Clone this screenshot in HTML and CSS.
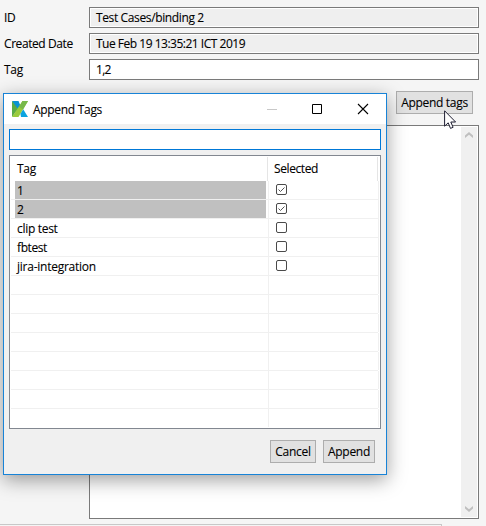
FILE: index.html
```html
<!DOCTYPE html>
<html lang="en">
<head>
<meta charset="utf-8">
<title>Append Tags</title>
<link rel="stylesheet" href="styles.css">
</head>
<body>
<main class="page">
  <div class="field"><label>ID</label><div class="box readonly"><span class="t-id">Test Cases/binding 2</span></div></div>
  <div class="field"><label class="t-created">Created Date</label><div class="box readonly"><span class="t-date">Tue Feb 19 13:35:21 ICT 2019</span></div></div>
  <div class="field"><label>Tag</label><div class="box"><span class="t-value">1,2</span></div></div>
  <div class="actions"><button class="button append-tags">Append tags</button></div>
  <div class="area">
    <div class="scrollbar">
      <svg width="8" height="6" viewBox="0 0 8 6"><path d="M0 3.6L4 0l4 3.6V6L4 2.8 0 6z" fill="#bfbfbf"/></svg>
      <svg width="8" height="6" viewBox="0 0 8 6"><path d="M0 0l4 3.2L8 0v2.4L4 6 0 2.4z" fill="#bfbfbf"/></svg>
    </div>
  </div>
  <div class="next-panel"></div>
</main>

<section class="dialog">
  <header class="titlebar">
    <svg class="logo" width="16" height="16" viewBox="0 0 16 16">
      <path d="M0 0h6.5l2.5 6-4 5z" fill="#0a93d3"/>
      <path d="M0 0l6 8-6 8z" fill="#5aab46"/>
      <path d="M10.5 0H16L6.5 16H0z" fill="#9aca3c"/>
      <path d="M10.5 0H16l-5 8.4-4-2.6z" fill="#78b94a"/>
      <path d="M11.2 8.2L16 16H9l-.6-3.2z" fill="#0ba3df"/>
    </svg>
    <span class="title">Append Tags</span>
    <svg class="controls" width="102" height="12" viewBox="0 0 102 12" fill="none">
      <path d="M0 6.5h10" stroke="#c8c8c8"/>
      <path d="M45.5 1.5h9v9h-9z" stroke="#000"/>
      <path d="M91 1l10 10M101 1L91 11" stroke="#000" stroke-width="1.1"/>
    </svg>
  </header>
  <div class="search"></div>
  <div class="table">
    <div class="head"><span class="th-tag">Tag</span><span class="th-selected">Selected</span></div>
    <div class="row"><div class="name picked">1</div><div class="cell"><i class="check"><svg width="9" height="9" viewBox="0 0 9 9"><path d="M1.5 4.5l2 2 4-4" fill="none" stroke="#555"/></svg></i></div></div>
    <div class="row"><div class="name picked">2</div><div class="cell"><i class="check"><svg width="9" height="9" viewBox="0 0 9 9"><path d="M1.5 4.5l2 2 4-4" fill="none" stroke="#555"/></svg></i></div></div>
    <div class="row"><div class="name">clip test</div><div class="cell"><i class="check"></i></div></div>
    <div class="row"><div class="name t-fb">fbtest</div><div class="cell"><i class="check"></i></div></div>
    <div class="row"><div class="name t-jira">jira-integration</div><div class="cell"><i class="check"></i></div></div>
    <div class="row"><div class="name"></div><div class="cell"></div></div>
    <div class="row"><div class="name"></div><div class="cell"></div></div>
    <div class="row"><div class="name"></div><div class="cell"></div></div>
    <div class="row"><div class="name"></div><div class="cell"></div></div>
    <div class="row"><div class="name"></div><div class="cell"></div></div>
    <div class="row"><div class="name"></div><div class="cell"></div></div>
    <div class="row"><div class="name"></div><div class="cell"></div></div>
    <div class="row last"><div class="name"></div><div class="cell"></div></div>
  </div>
  <footer class="buttons"><button class="button cancel">Cancel</button><button class="button append">Append</button></footer>
</section>

<svg class="cursor" width="13" height="20" viewBox="0 0 13 20"><path d="M.6 .8v15.4l3.6-3.4 2.3 5.6 2.6-1.1-2.3-5.3h4.8z" fill="#fff" stroke="#1c1c30"/></svg>
</body>
</html>
```

FILE: styles.css
```css
* { box-sizing: border-box; }

body {
  margin: 0;
  width: 486px;
  height: 526px;
  overflow: hidden;
  position: relative;
  background: #f5f5f5;
  color: #000;
  font: 12px/19px "Open Sans", "Noto Sans", sans-serif;
  letter-spacing: -0.3px;
  -webkit-text-stroke: 0.1px #000;
}

svg { display: block; }

.page { padding-top: 7px; }

.field {
  display: grid;
  grid-template-columns: 85px 390px;
  padding-left: 4px;
  margin-bottom: 5px;
  height: 21px;
  line-height: 21px;
}

.box {
  border: 1px solid #7a7a7a;
  background: #fff;
  padding-left: 6px;
  line-height: 19px;
  white-space: nowrap;
}

.readonly {
  background: #efefef;
  box-shadow: inset 0 0 0 1px #fff;
}

.t-id { letter-spacing: -0.37px; }
.t-created { letter-spacing: -0.42px; }
.t-date { letter-spacing: -0.49px; }
.t-value { letter-spacing: -0.7px; }

.actions {
  display: flex;
  justify-content: flex-end;
  padding: 6px 13px 0 0;
  height: 40px;
}

.button {
  height: 23px;
  padding: 0;
  border: 1px solid #adadad;
  background: #e1e1e1;
  color: #000;
  font: inherit;
  line-height: 21px;
  letter-spacing: inherit;
  white-space: nowrap;
}

.append-tags { width: 77px; }

.area {
  width: 390px;
  height: 394px;
  margin-left: 89px;
  padding: 1px;
  border: 1px solid #7a7a7a;
  background: #fff;
  display: flex;
  justify-content: flex-end;
}

.scrollbar {
  width: 16px;
  background: #f0f0f0;
  display: flex;
  flex-direction: column;
  justify-content: space-between;
  align-items: center;
  padding: 5px 1px 5px 0;
}

.next-panel {
  width: 442px;
  height: 2px;
  margin-top: 5px;
  border: 1px solid #c8c8c8;
  border-width: 1px 1px 0 0;
}

.dialog {
  position: absolute;
  left: 3px;
  top: 93px;
  width: 384px;
  height: 382px;
  border: 1px solid #1883d7;
  background: #f0f0f0;
  box-shadow: 0 5px 18px rgba(0, 0, 0, 0.38);
}

.titlebar {
  height: 30px;
  background: #fff;
  display: flex;
  align-items: center;
  padding: 0 17px 0 8px;
}

.title { margin-left: 5px; }
.controls { margin-left: auto; }

.search {
  height: 21px;
  margin: 5px 5px 0;
  border: 1px solid #0078d7;
  background: #fff;
}

.table {
  height: 274px;
  margin: 5px 5px 0;
  border: 1px solid #828790;
  background: #fff;
  padding: 1px 2px 1px 1px;
}

.head {
  display: grid;
  grid-template-columns: 257px 110px;
  height: 24px;
  line-height: 24px;
}

.head span { border-right: 1px solid #e5e5e5; padding-left: 6px; }
.head .th-selected { letter-spacing: -0.4px; }

.row {
  display: grid;
  grid-template-columns: 258px 110px;
  height: 19px;
  border-bottom: 1px solid #f0f0f0;
}

.last { border-bottom: 0; height: 18px; }

.name {
  border-right: 1px solid #f0f0f0;
  padding-left: 6px;
  line-height: 19px;
}

.t-fb { letter-spacing: -0.4px; }
.t-jira { letter-spacing: -0.25px; }

.picked {
  background: linear-gradient(#c0c0c0, #c0c0c0) 4px 0 / 251px 18px no-repeat;
}

.cell {
  border-right: 1px solid #f0f0f0;
  padding: 3px 0 0 7px;
}

.check {
  display: block;
  width: 11px;
  height: 11px;
  border: 1px solid #4a4a4a;
  border-radius: 2px;
}

.buttons {
  display: flex;
  justify-content: flex-end;
  gap: 7px;
  padding: 11px 11px 0 0;
}

.cancel { width: 46px; }
.append { width: 52px; }

.cursor {
  position: absolute;
  left: 444px;
  top: 110px;
}
```
